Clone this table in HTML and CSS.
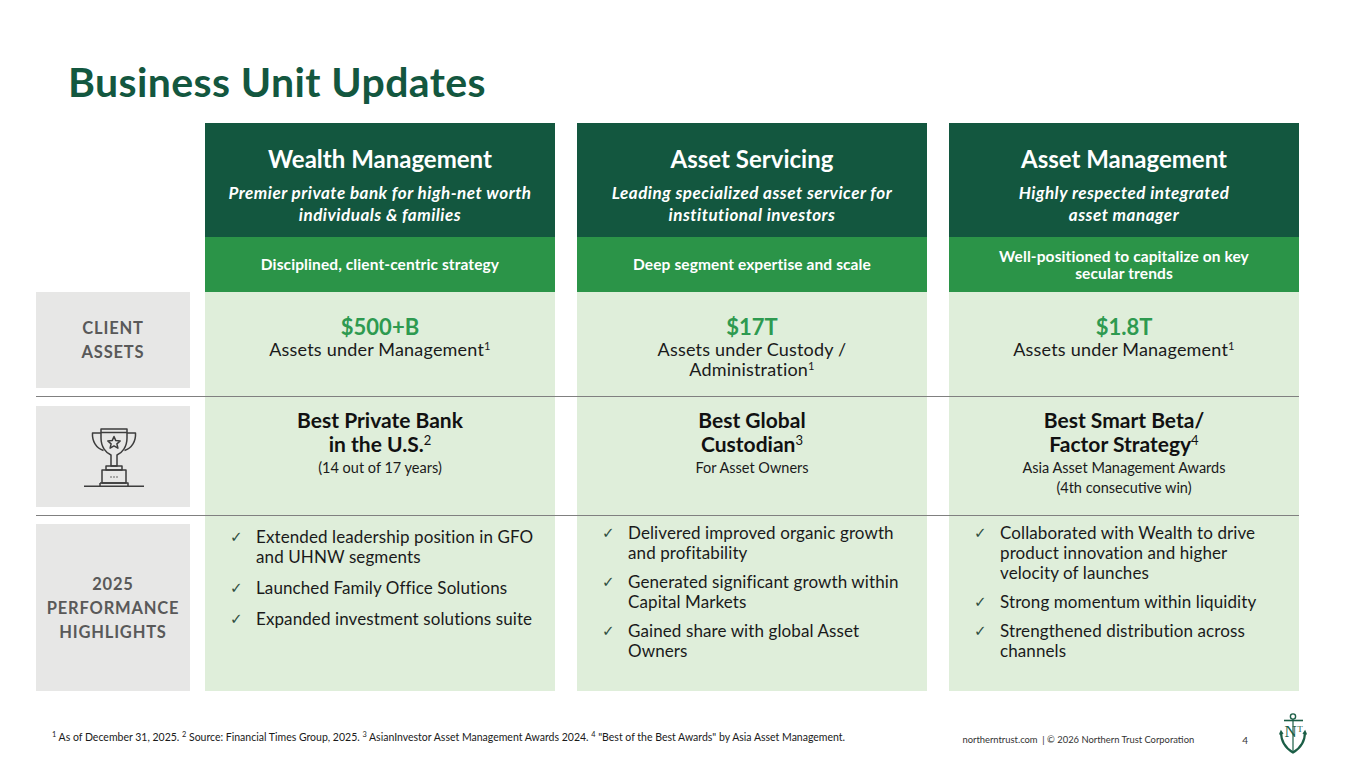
FILE: index.html
```html
<!DOCTYPE html>
<html>
<head>
<meta charset="utf-8">
<link rel="stylesheet" href="styles.css">
</head>
<body>
<div class="slide">
  <h1 class="title">Business Unit Updates</h1>
  <div class="table">
    <div class="row head">
      <div class="lab"></div>
      <div class="cells">
        <div class="hcell">
          <div class="htop">
            <div class="hname">Wealth Management</div>
            <div class="hsub">Premier private bank for high-net worth<br>individuals &amp; families</div>
          </div>
          <div class="hband">Disciplined, client-centric strategy</div>
        </div>
        <div class="hcell">
          <div class="htop">
            <div class="hname">Asset Servicing</div>
            <div class="hsub">Leading specialized asset servicer for<br>institutional investors</div>
          </div>
          <div class="hband">Deep segment expertise and scale</div>
        </div>
        <div class="hcell">
          <div class="htop">
            <div class="hname">Asset Management</div>
            <div class="hsub">Highly respected integrated<br>asset manager</div>
          </div>
          <div class="hband two">Well-positioned to capitalize on key<br>secular trends</div>
        </div>
      </div>
    </div>

    <div class="row r1">
      <div class="lab"><div class="labbox box1">CLIENT<br>ASSETS</div></div>
      <div class="cells">
        <div class="cell">
          <div class="val">$500+B</div>
          <div class="desc">Assets under Management<sup>1</sup></div>
        </div>
        <div class="cell">
          <div class="val">$17T</div>
          <div class="desc">Assets under Custody /<br>Administration<sup>1</sup></div>
        </div>
        <div class="cell">
          <div class="val">$1.8T</div>
          <div class="desc">Assets under Management<sup>1</sup></div>
        </div>
      </div>
    </div>

    <div class="row r2">
      <div class="lab">
        <div class="labbox box2">
          <svg class="trophy" width="60" height="60" viewBox="0 0 60 60" fill="none" stroke="#3d3d3d" stroke-width="1.5" stroke-linejoin="round">
            <path d="M17 2 H43 V11 C43 20 38 26 33 28 V39 H27 V28 C22 26 17 20 17 11 Z"/>
            <path d="M17 5.5 H43"/>
            <path d="M17 6 H8.5 C8 14 12 21 19.5 23.5"/>
            <path d="M43 6 H51.5 C52 14 48 21 40.5 23.5"/>
            <path d="M30 9.5 L31.8 13.6 L36.2 14 L32.9 16.9 L33.9 21.2 L30 18.9 L26.1 21.2 L27.1 16.9 L23.8 14 L28.2 13.6 Z"/>
            <path d="M22 39 H38 V43 H22 Z"/>
            <path d="M18 43 H42 V56 H18 Z"/>
            <path d="M16 56 H44 V59"/>
            <path d="M16 56 V59"/>
            <path d="M0 59.2 H60"/>
            <path d="M26.5 50 H27.5 M29.5 50 H30.5 M32.5 50 H33.5" stroke-width="1.4"/>
          </svg>
        </div>
      </div>
      <div class="cells">
        <div class="cell">
          <div class="award">Best Private Bank<br>in the U.S.<sup>2</sup></div>
          <div class="note">(14 out of 17 years)</div>
        </div>
        <div class="cell">
          <div class="award">Best Global<br>Custodian<sup>3</sup></div>
          <div class="note">For Asset Owners</div>
        </div>
        <div class="cell">
          <div class="award">Best Smart Beta/<br>Factor Strategy<sup>4</sup></div>
          <div class="note">Asia Asset Management Awards<br>(4th consecutive win)</div>
        </div>
      </div>
    </div>

    <div class="row r3">
      <div class="lab"><div class="labbox box3">2025<br>PERFORMANCE<br>HIGHLIGHTS</div></div>
      <div class="cells">
        <div class="cell">
          <ul class="checks wide">
            <li>Extended leadership position in GFO and UHNW segments</li>
            <li>Launched Family Office Solutions</li>
            <li>Expanded investment solutions suite</li>
          </ul>
        </div>
        <div class="cell">
          <ul class="checks">
            <li>Delivered improved organic growth and profitability</li>
            <li>Generated significant growth within Capital Markets</li>
            <li>Gained share with global Asset Owners</li>
          </ul>
        </div>
        <div class="cell">
          <ul class="checks">
            <li>Collaborated with Wealth to drive product innovation and higher velocity of launches</li>
            <li>Strong momentum within liquidity</li>
            <li>Strengthened distribution across channels</li>
          </ul>
        </div>
      </div>
    </div>
  </div>

  <footer class="foot">
    <div class="fnote"><sup>1</sup> As of December 31, 2025. <sup>2</sup> Source: Financial Times Group, 2025. <sup>3</sup> AsianInvestor Asset Management Awards 2024. <sup>4</sup> "Best of the Best Awards" by Asia Asset Management.</div>
    <div class="copy">northerntrust.com&nbsp; | © 2026 Northern Trust Corporation</div>
    <div class="pnum">4</div>
    <svg class="logo" width="30" height="42" viewBox="0 0 30 42" fill="none" stroke="#1b5e46">
      <circle cx="14" cy="4.5" r="2.6" stroke-width="1.4"/>
      <path d="M5 8.5 H24" stroke-width="1.6"/>
      <path d="M14 7 V40" stroke-width="1.2"/>
      <path d="M2 20 C2 31 8 37 14 40.5 C20 37 26 31 26 20" stroke-width="2.2"/>
      <path d="M0.5 22.5 L2 19 L4 22" stroke-width="1.2"/>
      <path d="M24 22 L26 19 L27.5 22.5" stroke-width="1.2"/>
      <text x="5.6" y="24.5" class="logo-n" fill="#1b5e46" stroke="none">N</text>
      <text x="18.2" y="19.5" class="logo-t" fill="#1b5e46" stroke="none">T</text>
    </svg>
  </footer>
</div>
</body>
</html>
```

FILE: styles.css
```css
* { box-sizing: border-box; }
html, body { margin: 0; padding: 0; background: #ffffff; }
body { font-family: Lato, "Open Sans", Arial, sans-serif; color: #1a1a1a; }

.slide { width: 1365px; height: 768px; overflow: hidden; position: relative; }

.title {
  margin: 0;
  padding: 58px 0 0 68px;
  height: 123px;
  font-size: 41px;
  line-height: 48px;
  font-weight: 700;
  color: #13573f;
  letter-spacing: 0.4px;
}

.table { padding-left: 36px; width: 1299px; }

.row { display: flex; }
.lab { width: 154px; flex: none; margin-right: 15px; }
.cells { display: grid; grid-template-columns: 350px 350px 350px; column-gap: 22px; }

.hcell { display: flex; flex-direction: column; }
.htop {
  background: #13573f;
  height: 114px;
  padding-top: 22px;
  text-align: center;
  color: #ffffff;
}
.hname { font-size: 24px; font-weight: 700; line-height: 28px; }
.hsub { font-size: 17px; font-weight: 700; font-style: italic; line-height: 22px; margin-top: 9px; letter-spacing: 0.5px; }
.hband {
  background: #2b9448;
  height: 55px;
  display: flex; align-items: center; justify-content: center;
  text-align: center;
  color: #ffffff;
  font-size: 15.5px; font-weight: 700; line-height: 17px; letter-spacing: 0.1px;
}

.cell { background: #dfeeda; text-align: center; }

.r2, .r3 { border-top: 1px solid #808080; }
.r1 .cell { height: 104px; padding-top: 23px; }
.r2 .cell { height: 118px; padding-top: 11px; }
.r3 .cell { height: 175px; padding-top: 7px; text-align: left; }

.labbox {
  background: #e7e7e6;
  display: flex; align-items: center; justify-content: center;
  text-align: center;
  color: #595959;
  font-weight: 700;
  font-size: 16.5px;
  line-height: 24px;
  letter-spacing: 0.8px;
}
.box1 { height: 96px; }
.box2 { height: 101px; margin-top: 9px; }
.box3 { height: 167px; margin-top: 8px; }
.trophy { display: block; margin-left: 2px; }

.val { font-size: 22px; font-weight: 700; color: #2e9a50; line-height: 24px; }
.desc { font-size: 18px; line-height: 20px; color: #1a1a1a; letter-spacing: 0.2px; }

.award { font-size: 21px; font-weight: 700; line-height: 24px; color: #111; }
.note { font-size: 14.5px; line-height: 20px; margin-top: 2px; color: #1a1a1a; }

sup { font-size: 62%; line-height: 0; vertical-align: 0.55em; }
.award sup { font-weight: 400; }

.checks { list-style: none; margin: 0; padding: 0 16px 0 51px; }
.checks li {
  position: relative;
  font-size: 17px;
  line-height: 20px;
  margin-bottom: 9px;
  letter-spacing: 0.1px;
  color: #1a1a1a;
}
.checks li::before {
  content: "\2713";
  position: absolute;
  left: -26px; top: 0;
  font-family: "DejaVu Sans", sans-serif;
  font-size: 15px;
  color: #2f4f3f;
}
.checks.wide { padding-top: 4px; }
.checks.wide li { margin-bottom: 11px; }

.foot { display: flex; align-items: flex-start; padding-left: 52px; margin-top: 21px; }
.fnote { font-size: 10.5px; line-height: 12px; margin-top: 19px; color: #1a1a1a; white-space: nowrap; }
.fnote sup { font-size: 70%; vertical-align: 0.5em; }
.copy { margin-left: auto; font-size: 9.4px; line-height: 12px; margin-top: 22px; color: #333; white-space: nowrap; }
.pnum { margin-left: 48px; font-size: 10px; line-height: 12px; margin-top: 22px; color: #333; }
.logo { display: block; margin-left: 31px; margin-right: 56px; }
.logo-n { font-family: "Liberation Serif", serif; font-size: 17px; }
.logo-t { font-family: "Liberation Serif", serif; font-size: 9px; }
```
